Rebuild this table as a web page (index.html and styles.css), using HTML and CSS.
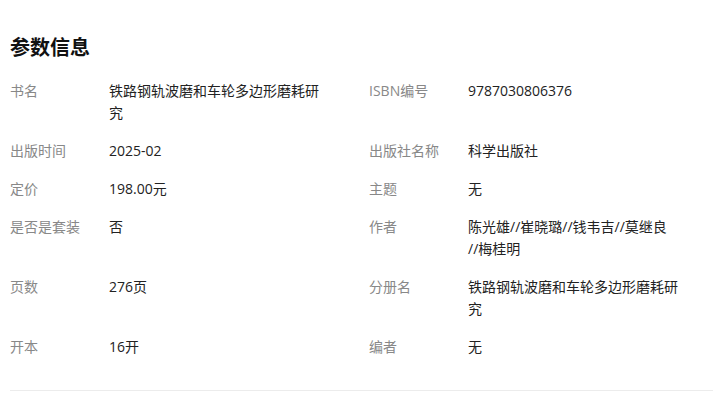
FILE: index.html
```html
<!DOCTYPE html>
<html lang="zh-CN">
<head>
<meta charset="utf-8">
<link rel="stylesheet" href="styles.css">
</head>
<body>
<section class="params">
  <h2 class="title">参数信息</h2>
  <div class="grid">
    <div class="item"><span class="label">书名</span><span class="value">铁路钢轨波磨和车轮多边形磨耗研究</span></div>
    <div class="item"><span class="label">ISBN编号</span><span class="value">9787030806376</span></div>
    <div class="item"><span class="label">出版时间</span><span class="value">2025-02</span></div>
    <div class="item"><span class="label">出版社名称</span><span class="value">科学出版社</span></div>
    <div class="item"><span class="label">定价</span><span class="value">198.00元</span></div>
    <div class="item"><span class="label">主题</span><span class="value">无</span></div>
    <div class="item"><span class="label">是否是套装</span><span class="value">否</span></div>
    <div class="item"><span class="label">作者</span><span class="value">陈光雄//崔晓璐//钱韦吉//莫继良<span class="nowrap">//梅桂明</span></span></div>
    <div class="item"><span class="label">页数</span><span class="value">276页</span></div>
    <div class="item"><span class="label">分册名</span><span class="value">铁路钢轨波磨和车轮多边形磨耗研究</span></div>
    <div class="item"><span class="label">开本</span><span class="value">16开</span></div>
    <div class="item"><span class="label">编者</span><span class="value">无</span></div>
  </div>
</section>
</body>
</html>
```
FILE: styles.css
```css
html, body {
  margin: 0;
  padding: 0;
  background: #fff;
}
body {
  font-family: "Open Sans", "Noto Sans CJK SC", sans-serif;
  color: #333;
}
.params {
  padding: 34px 10px 0 10px;
  width: 703px;
}
.title {
  margin: 0 0 18px 0;
  font-size: 20px;
  line-height: 28px;
  font-weight: 700;
  color: #111;
}
.grid {
  display: grid;
  grid-template-columns: 359px 1fr;
  padding-bottom: 16px;
  border-bottom: 1px solid #ececec;
}
.item {
  display: flex;
  align-items: flex-start;
  padding-bottom: 16px;
  font-size: 14px;
  line-height: 22px;
}
.label {
  width: 99px;
  flex-shrink: 0;
  color: #888;
}
.value {
  width: 212px;
  color: #222;
  word-break: break-all;
}
.nowrap {
  display: inline-block;
  white-space: nowrap;
}
```
